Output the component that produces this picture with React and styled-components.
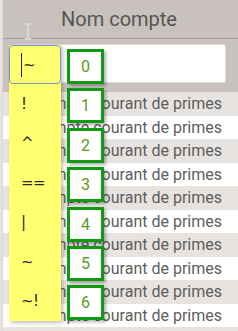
import React from "react";
import styled, { createGlobalStyle } from "styled-components";

const GlobalStyle = createGlobalStyle`
  html, body {
    margin: 0;
    padding: 0;
    background: #ffffff;
    overflow: hidden;
  }
  body {
    font-family: Roboto, "Liberation Sans", sans-serif;
  }
`;

const operators = ["~", "!", "^", "==", "|", "~", "~!"];
const rowCount = 11;

const App = () => {
  return (
    <>
      <GlobalStyle />
      <Grid>
        <HeaderCell>Nom compte</HeaderCell>
        <FilterCell>
          <FilterInput />
        </FilterCell>
        {Array.from({ length: rowCount }).map((_, i) => (
          <DataRow key={i} $striped={i % 2 === 0}>
            <span>Compte courant de primes</span>
          </DataRow>
        ))}

        <Cursor width="8" height="17" viewBox="0 0 8 17">
          <path
            d="M1 1h2.5M4.5 1H7M4 1.5v14M1 16h2.5M4.5 16H7"
            stroke="#ffffff"
            strokeWidth="2"
            fill="none"
          />
          <path
            d="M1 1h2.5M4.5 1H7M4 1.5v14M1 16h2.5M4.5 16H7"
            stroke="#9a9a9a"
            strokeWidth="0.8"
            fill="none"
          />
        </Cursor>

        <Dropdown>
          {operators.map((op, i) => (
            <Option key={i} $active={i === 0}>
              {i === 0 && <Caret />}
              <OpText>{op}</OpText>
              <Hint>{i}</Hint>
            </Option>
          ))}
        </Dropdown>
      </Grid>
    </>
  );
};

export default App;

/* table */
const Grid = styled.div`
  position: relative;
  width: 236px;
  height: 331px;
  overflow: hidden;
  display: grid;
  grid-template-rows: 39px 53px;
  grid-auto-rows: 23.5px;
  border-left: 1px solid #dcd6d4;
  margin-left: 2px;
  box-shadow: -2px 0 0 #e6e2e0;
`;

const HeaderCell = styled.div`
  background: #c9c1bd;
  border-bottom: 1px solid #a8a09c;
  color: #565656;
  font-size: 20px;
  display: flex;
  align-items: center;
  padding-left: 58px;
`;

const FilterCell = styled.div`
  background: #c9c1bd;
  display: flex;
  align-items: flex-start;
  padding: 5px 13px 0 8px;
`;

const FilterInput = styled.div`
  flex: 1;
  height: 39px;
  background: #ffffff;
  border: 1px solid #ddd8d6;
  border-radius: 2px;
  box-sizing: border-box;
`;

const DataRow = styled.div`
  background: ${(p) => (p.$striped ? "#e7e3e1" : "#ffffff")};
  color: #5e5e5e;
  font-size: 16px;
  display: flex;
  align-items: center;
  padding-left: 30px;
  white-space: nowrap;
`;

/* mouse pointer */
const Cursor = styled.svg`
  position: absolute;
  left: 21px;
  top: 23px;
`;

/* operator menu */
const Dropdown = styled.div`
  position: absolute;
  left: 6px;
  top: 45px;
  width: 52px;
  background: #ffff70;
  box-shadow: 2px 2px 4px rgba(0, 0, 0, 0.25);
  display: flex;
  flex-direction: column;
`;

const Option = styled.div`
  position: relative;
  height: 39.4px;
  box-sizing: border-box;
  display: flex;
  align-items: center;
  padding-left: 11px;
  color: #2a2a2a;
  font-family: "DejaVu Sans", Verdana, sans-serif;
  font-size: 15px;
  border: 1px solid ${(p) => (p.$active ? "#6e9cc2" : "transparent")};
  border-radius: ${(p) => (p.$active ? "4px" : "0")};
`;

const Caret = styled.span`
  width: 1px;
  height: 24px;
  background: #222;
  margin-right: 1px;
`;

const OpText = styled.span`
  letter-spacing: -0.5px;
`;

const Hint = styled.div`
  position: absolute;
  left: 57px;
  top: 3px;
  width: 37px;
  height: 35px;
  box-sizing: border-box;
  background: #ffffff;
  border: 3px solid #129912;
  box-shadow: 2px 2px 3px rgba(0, 0, 0, 0.3);
  color: #5a9a1e;
  font-family: Roboto, "Liberation Sans", sans-serif;
  font-size: 16px;
  display: flex;
  align-items: center;
  justify-content: center;
`;
